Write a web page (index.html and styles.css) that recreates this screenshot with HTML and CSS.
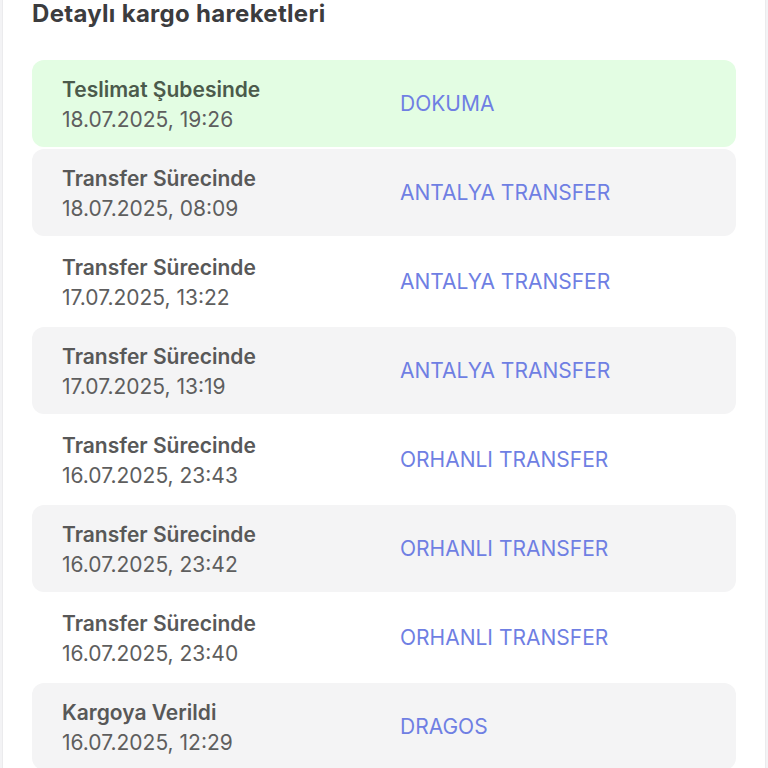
FILE: index.html
```html
<!DOCTYPE html>
<html lang="tr">
<head>
  <meta charset="UTF-8"/>
  <title>Detaylı kargo hareketleri</title>
  <link rel="stylesheet" href="styles.css">
</head>
<body>
<div class="card">
  <h3 class="card-title">Detaylı kargo hareketleri</h3>
  <div class="moves">
    <div class="move move-done">
      <div class="move-info">
        <div class="move-status">Teslimat Şubesinde</div>
        <div class="move-date">18.07.2025, 19:26</div>
      </div>
      <div class="move-place">DOKUMA</div>
    </div>
    <div class="move move-alt">
      <div class="move-info">
        <div class="move-status">Transfer Sürecinde</div>
        <div class="move-date">18.07.2025, 08:09</div>
      </div>
      <div class="move-place">ANTALYA TRANSFER</div>
    </div>
    <div class="move">
      <div class="move-info">
        <div class="move-status">Transfer Sürecinde</div>
        <div class="move-date">17.07.2025, 13:22</div>
      </div>
      <div class="move-place">ANTALYA TRANSFER</div>
    </div>
    <div class="move move-alt">
      <div class="move-info">
        <div class="move-status">Transfer Sürecinde</div>
        <div class="move-date">17.07.2025, 13:19</div>
      </div>
      <div class="move-place">ANTALYA TRANSFER</div>
    </div>
    <div class="move">
      <div class="move-info">
        <div class="move-status">Transfer Sürecinde</div>
        <div class="move-date">16.07.2025, 23:43</div>
      </div>
      <div class="move-place">ORHANLI TRANSFER</div>
    </div>
    <div class="move move-alt">
      <div class="move-info">
        <div class="move-status">Transfer Sürecinde</div>
        <div class="move-date">16.07.2025, 23:42</div>
      </div>
      <div class="move-place">ORHANLI TRANSFER</div>
    </div>
    <div class="move">
      <div class="move-info">
        <div class="move-status">Transfer Sürecinde</div>
        <div class="move-date">16.07.2025, 23:40</div>
      </div>
      <div class="move-place">ORHANLI TRANSFER</div>
    </div>
    <div class="move move-alt">
      <div class="move-info">
        <div class="move-status">Kargoya Verildi</div>
        <div class="move-date">16.07.2025, 12:29</div>
      </div>
      <div class="move-place">DRAGOS</div>
    </div>
  </div>
</div>
</body>
</html>
```
FILE: styles.css
```css
body {
    font-family: Inter, "Noto Sans", sans-serif;
    background: #f3f3f5;
    margin: 0;
    padding: 0 2px;
    overflow: hidden;
}
.card {
    background: #fff;
    border-left: 1px solid #ebebed;
    border-right: 1px solid #ebebed;
    padding: 0 29px 40px;
    min-height: 100vh;
}
.card-title {
    margin: 0 0 33px;
    font-size: 24px;
    line-height: 27px;
    font-weight: 700;
    color: #3c3c3e;
    letter-spacing: 0.3px;
}
.moves {
    display: flex;
    flex-direction: column;
    gap: 2px;
}
.move {
    display: grid;
    grid-template-columns: 1fr 1fr;
    column-gap: 32px;
    align-items: center;
    height: 87px;
    padding: 0 30px;
    border-radius: 12px;
    background: #fff;
}
.move-alt {
    background: #f4f4f5;
}
.move-done {
    background: #e3fde3;
}
.move-info {
    padding-top: 3px;
}
.move-status {
    font-size: 21px;
    line-height: 30px;
    font-weight: 600;
    color: #585858;
}
.move-done .move-status {
    color: #4b5a4b;
}
.move-date {
    font-size: 21px;
    line-height: 30px;
    color: #5e5e5e;
}
.move-place {
    font-size: 21px;
    color: #6f7fe3;
}
```
